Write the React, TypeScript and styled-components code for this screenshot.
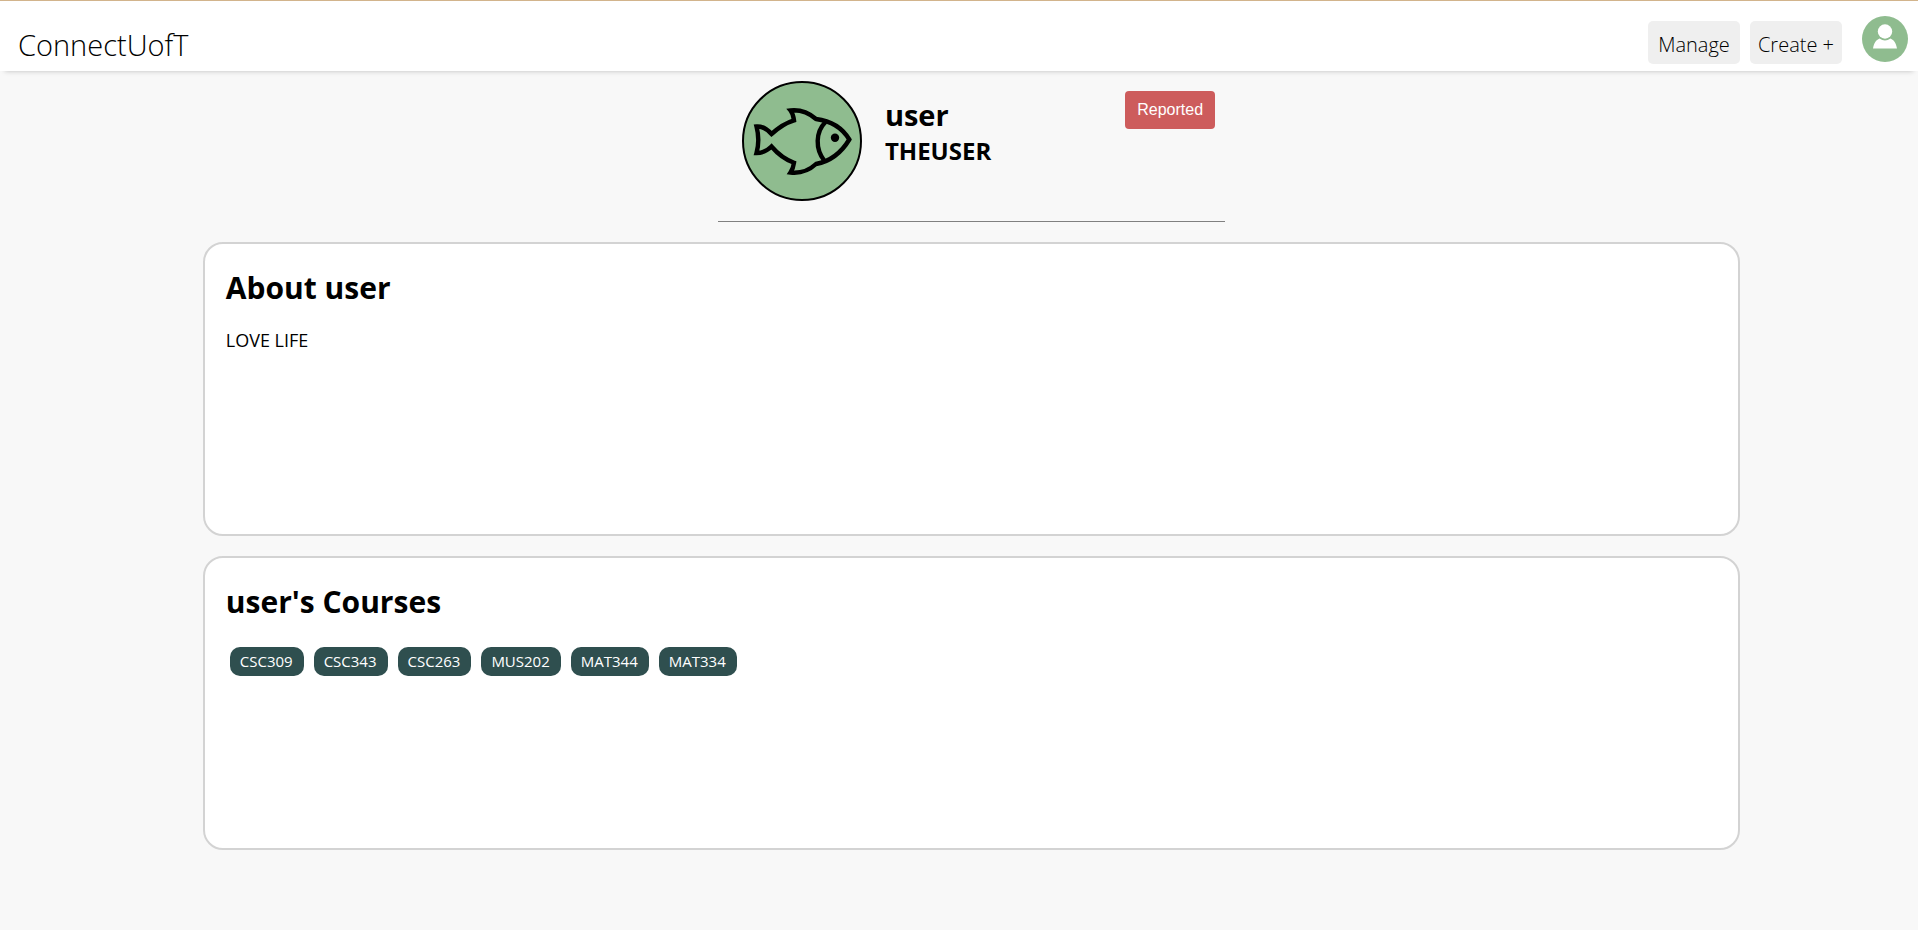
import React from "react";
import styled, { createGlobalStyle } from "styled-components";

const GlobalStyle = createGlobalStyle`
  * { box-sizing: border-box; }
  body {
    margin: 0;
    background: #f8f8f8;
    color: #000;
    font-family: "Open Sans", "Noto Sans", sans-serif;
  }
  h1, h2, p, ul { margin: 0; padding: 0; }
`;

const Header = styled.header`
  display: flex;
  align-items: flex-start;
  justify-content: space-between;
  height: 71px;
  padding: 15px 10px 0 18px;
  background: #fff;
  border-top: 1px solid #d2b48c;
  box-shadow: 0 5px 5px -5px #bbb;
`;

const Brand = styled.a`
  margin-top: 9px;
  color: #000;
  font-size: 29px;
  line-height: 40px;
  font-weight: 300;
  text-decoration: none;
`;

const Nav = styled.nav`
  display: flex;
  align-items: flex-start;
  gap: 10px;
`;

const NavButton = styled.button`
  width: 92px;
  height: 43px;
  margin-top: 5px;
  padding: 3px 0 0;
  border: 0;
  border-radius: 5px;
  background: #efefef;
  color: #000;
  font: 300 20px "Open Sans", "Noto Sans", sans-serif;
  white-space: nowrap;
`;

const AccountButton = styled.button`
  width: 46px;
  height: 46px;
  margin-left: 10px;
  padding: 0;
  border: 0;
  border-radius: 50%;
  background: #8fbc8f;
  svg { display: block; }
`;

const Main = styled.main`
  display: flex;
  flex-direction: column;
  align-items: center;
  gap: 20px;
  padding: 0 0 20px 25px;
`;

const Profile = styled.section`
  display: flex;
  align-items: flex-start;
  width: calc(25% + 34px);
  min-width: 440px;
  height: 151px;
  padding: 10px 10px 0 24px;
  border-bottom: 1px solid #808080;
`;

const Avatar = styled.div`
  flex: none;
  width: 120px;
  height: 120px;
  border: 2px solid #000;
  border-radius: 50%;
  background: #8fbc8f;
  svg { display: block; }
`;

const Names = styled.div`
  flex: 1;
  padding: 16px 0 0 23px;
`;

const DisplayName = styled.h1`
  font-size: 29px;
  line-height: 36px;
  font-weight: 700;
`;

const UserName = styled.h2`
  font-size: 24px;
  line-height: 36px;
  font-weight: 700;
`;

const ReportButton = styled.button`
  width: 90px;
  height: 38px;
  margin-top: 10px;
  padding: 0;
  border: 0;
  border-radius: 4px;
  background: #cd5c5c;
  color: #fff;
  font: 16px "Liberation Sans", Arial, sans-serif;
`;

const Card = styled.section`
  width: calc(80% + 23px);
  min-height: 294px;
  padding: 24px 21px;
  border: 2px solid #d3d3d3;
  border-radius: 20px;
  background: #fff;
`;

const CardTitle = styled.h2`
  font-size: 30px;
  line-height: 40px;
  font-weight: 700;
`;

const Bio = styled.p`
  margin-top: 20px;
  font-size: 18px;
  line-height: 24px;
`;

const Courses = styled.ul`
  display: flex;
  flex-wrap: wrap;
  gap: 10px;
  margin-top: 25px;
  padding-left: 4px;
  list-style: none;
`;

const Course = styled.li`
  height: 29px;
  padding: 0 11px 0 10px;
  border-radius: 10px;
  background: #2f4f4f;
  color: #fff;
  font-size: 15px;
  line-height: 29px;
`;

const courses = ["CSC309", "CSC343", "CSC263", "MUS202", "MAT344", "MAT334"];

function PersonIcon() {
  return (
    <svg width="46" height="46" viewBox="0 0 46 46" fill="#fff" aria-hidden="true">
      <path d="M11 32.500C12 27 14 24 17.500 22.500Q23 26.500 28.500 22.500C32 24 34 27 35 32.500Z" />
      <circle cx="23" cy="15.500" r="7.200" />
    </svg>
  );
}

function FishIcon() {
  return (
    <svg width="116" height="116" viewBox="2 2 116 116" fill="none" stroke="#000" strokeWidth="4.400" aria-hidden="true">
      <path d="M29.500 53C35 48 43 42 52 39.300C51.500 35 50.500 32 48.500 29.500C58 28.500 67 32 74 38C90 40 101 48 107.300 58.500C101 69 90 80 74 83C67 89.500 58 92.500 48.500 91.500C50.500 88.500 51.500 85.500 52 81.700C43 78.500 35 72 29.500 65.500C25 70 20 72 14.500 72C17 63 17 55 14.500 45.500C20 45 25 48 29.500 53Z" />
      <path d="M83.500 41C73.500 51 73 68 82.500 80" />
      <circle cx="93" cy="56.700" r="4.200" fill="#000" stroke="none" />
    </svg>
  );
}

export default function App() {
  return (
    <>
      <GlobalStyle />
      <Header>
        <Brand href="#">ConnectUofT</Brand>
        <Nav>
          <NavButton type="button">Manage</NavButton>
          <NavButton type="button">Create +</NavButton>
          <AccountButton type="button" aria-label="Account">
            <PersonIcon />
          </AccountButton>
        </Nav>
      </Header>
      <Main>
        <Profile>
          <Avatar>
            <FishIcon />
          </Avatar>
          <Names>
            <DisplayName>user</DisplayName>
            <UserName>THEUSER</UserName>
          </Names>
          <ReportButton type="button">Reported</ReportButton>
        </Profile>
        <Card>
          <CardTitle>About user</CardTitle>
          <Bio>LOVE LIFE</Bio>
        </Card>
        <Card>
          <CardTitle>user's Courses</CardTitle>
          <Courses>
            {courses.map((code) => (
              <Course key={code}>{code}</Course>
            ))}
          </Courses>
        </Card>
      </Main>
    </>
  );
}
